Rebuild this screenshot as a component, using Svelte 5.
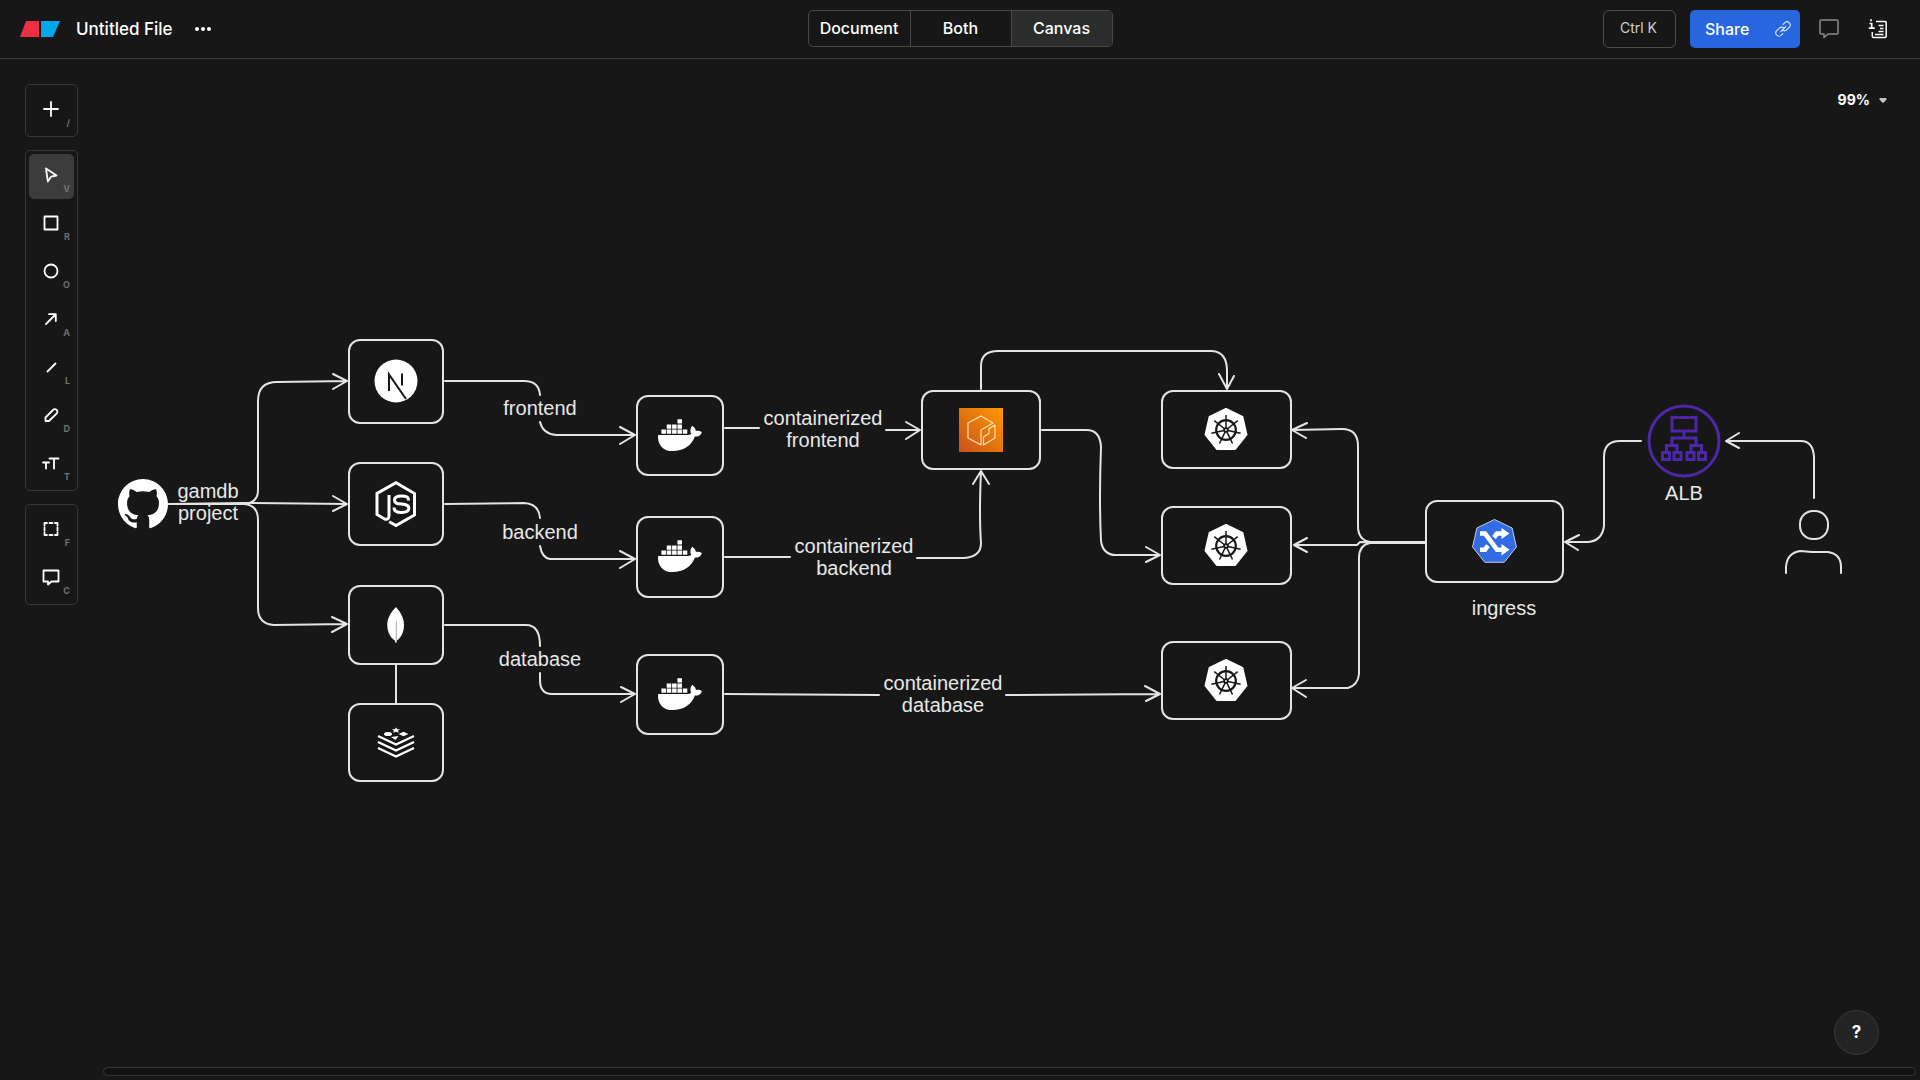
<script>
  let view = $state('Canvas');
  let tool = $state('Select');

  const views = ['Document', 'Both', 'Canvas'];

  // Every tool icon is stroked inside a 24 x 24 view box.
  const toolGroups = [
    [{ name: 'Insert', key: '/', d: 'M12 5v14M5 12h14' }],
    [
      { name: 'Select', key: 'V', d: 'M7 5.5l10.5 7-5.5 1.2-3.2 4.8z' },
      { name: 'Rectangle', key: 'R', d: 'M5.5 5.5h13v13h-13z' },
      { name: 'Oval', key: 'O', d: 'M18.5 12a6.500 6.500 0 1 1-13 0a6.500 6.500 0 1 1 13 0z' },
      { name: 'Arrow', key: 'A', d: 'M7 17l9.500-9.500M10 7.200h6.800V14' },
      { name: 'Line', key: 'L', d: 'M8.500 16.500l8-8' },
      { name: 'Draw', key: 'D', d: 'M6.500 18v-3.500l7.500-7.500a2.500 2.500 0 0 1 3.700 3.500L10 18z' },
      { name: 'Text', key: 'T', d: 'M10.500 7.500h9M15 7.500v10M4 11.500h6M7 11.500v6' }
    ],
    [
      { name: 'Figure', key: 'F', d: 'M5.500 8.500V6h2.500M10.500 6h3M16 6h2.500v2.500M18.500 10.500v3M18.500 15.500V18H16M13.500 18h-3M8 18H5.500v-2.500M5.500 13.500v-3' },
      { name: 'Comment', key: 'C', d: 'M4.500 5.500h15v11h-7l-3.500 3v-3H4.500z' }
    ]
  ];

  const boxes = [
    [349, 340, 94, 83], [349, 463, 94, 82], [349, 586, 94, 78], [349, 704, 94, 77],
    [637, 396, 86, 79], [637, 517, 86, 80], [637, 655, 86, 79],
    [922, 391, 118, 78],
    [1162, 391, 129, 77], [1162, 507, 129, 77], [1162, 642, 129, 77],
    [1426, 501, 137, 81]
  ];

  const edges = [
    'M169 504H244Q258 503 258 490V401Q258 382 277 382L347 381M333 374L347 381L333 389',
    'M169 504L244 503L347 504M333 496L347 504L333 511',
    'M169 504H244Q258 505 258 520V608Q258 624 274 625L347 624M332 617L347 624L332 632',
    'M445 381H524Q539 381 540 395M540 422Q543 434 556 435L635 435M620 427L635 435L620 444',
    'M445 504L524 503Q539 504 540 518M540 546Q542 558 550 559H635M620 551L635 559L620 568',
    'M445 625H526Q540 625 540 646M540 673V680Q540 694 552 694H635M621 687L635 694L621 702',
    'M396 665V704',
    'M725 428H759M886 430H920M906 422L920 430L906 439',
    'M725 557H790M917 558H964Q981 557 981 543Q979 515 981 471M973 484L981 471L989 484',
    'M725 694L879 695M1006 695L1160 694M1145 686L1160 694L1146 701',
    'M981 389V366Q981 351 998 351H1212Q1227 352 1227 371V389M1219 374L1227 389L1234 376',
    'M1042 430H1085Q1100 429 1101 447Q1099 500 1101 541Q1103 555 1116 555H1160M1146 547L1160 555L1146 562',
    'M1425 542H1370Q1358 540 1358 526V446Q1358 429 1342 429L1292 430M1307 423L1292 430L1306 438',
    'M1425 543L1360 542L1357 545H1294M1307 538L1294 545L1307 552',
    'M1425 543H1370Q1359 545 1359 558V674Q1358 685 1348 688H1293M1306 680L1292 688L1306 697',
    'M1641 441H1620Q1604 441 1604 457V526Q1602 541 1588 542H1566M1579 535L1565 542L1578 550',
    'M1814 498V457Q1813 441 1801 441H1726M1739 433L1726 441L1739 448'
  ];

  const labels = [
    { x: 208, y: 498, lines: ['gamdb', 'project'] },
    { x: 540, y: 415, lines: ['frontend'] },
    { x: 540, y: 539, lines: ['backend'] },
    { x: 540, y: 666, lines: ['database'] },
    { x: 823, y: 425, lines: ['containerized', 'frontend'] },
    { x: 854, y: 553, lines: ['containerized', 'backend'] },
    { x: 943, y: 690, lines: ['containerized', 'database'] },
    { x: 1504, y: 615, lines: ['ingress'] },
    { x: 1684, y: 500, lines: ['ALB'] }
  ];

  const whales = [[658, 417], [658, 538], [658, 676]];
  const wheels = [[1226, 430], [1226, 546], [1226, 681]];
  const sevenths = [0, 1, 2, 3, 4, 5, 6];

  function heptagon(r) {
    return sevenths
      .map((i) => {
        const a = (i * 2 * Math.PI) / 7;
        return `${(r * Math.sin(a)).toFixed(2)},${(-r * Math.cos(a)).toFixed(2)}`;
      })
      .join(' ');
  }
</script>

<div class="app">
  <svg class="canvas" role="img" aria-label="Deployment diagram">
    <defs>
      <linearGradient id="orange" x1="0" y1="1" x2="1" y2="0">
        <stop offset="0" stop-color="#c8511b" />
        <stop offset="1" stop-color="#ff9900" />
      </linearGradient>
    </defs>

    <g class="sketch">
      {#each boxes as [x, y, w, h]}
        <rect {x} {y} width={w} height={h} rx="11" />
      {/each}
      {#each edges as d}
        <path {d} />
      {/each}
      <!-- user -->
      <rect x="1800" y="511" width="28" height="28" rx="13" />
      <path d="M1786 573V567Q1787 553 1800 551L1812 552H1828Q1841 554 1841 567V573" />
    </g>

    <!-- GitHub -->
    <path class="solid" transform="translate(118 479) scale(.512)" d="M48.854 0C21.839 0 0 22 0 49.217c0 21.756 13.993 40.172 33.405 46.690 2.427.490 3.316-1.059 3.316-2.362 0-1.141-.080-5.052-.080-9.127-13.590 2.934-16.420-5.867-16.420-5.867-2.184-5.704-5.420-7.170-5.420-7.170-4.448-3.015.324-3.015.324-3.015 4.934.326 7.523 5.052 7.523 5.052 4.367 7.496 11.404 5.378 14.235 4.074.404-3.178 1.699-5.378 3.074-6.600-10.839-1.141-22.243-5.378-22.243-24.283 0-5.378 1.940-9.778 5.014-13.200-.485-1.222-2.184-6.275.486-13.038 0 0 4.125-1.304 13.426 5.052a46.970 46.970 0 0 1 12.214-1.630c4.125 0 8.330.571 12.213 1.630 9.302-6.356 13.427-5.052 13.427-5.052 2.670 6.763.970 11.816.485 13.038 3.155 3.422 5.015 7.822 5.015 13.200 0 18.905-11.404 23.060-22.324 24.283 1.780 1.548 3.316 4.481 3.316 9.126 0 6.600-.080 11.897-.080 13.526 0 1.304.890 2.853 3.316 2.364 19.412-6.520 33.405-24.935 33.405-46.691C97.707 22 75.788 0 48.854 0z" />

    <!-- Next.js -->
    <circle class="solid" cx="396" cy="381" r="21.500" />
    <path d="M389 391V374.500L406 399" fill="none" stroke="#171717" stroke-width="2" />
    <path d="M402 373.500V385.500" fill="none" stroke="#171717" stroke-width="2" />

    <!-- Node.js -->
    <g fill="none" stroke="#fff" stroke-width="3">
      <path d="M389 495v20.500q0 5-4.500 3.500l-7.500-4.500v-21l19-10.700 18.500 10.700v21.500l-18.500 10.500-6.800-3.800" />
      <path d="M408.500 500.500c0-4-2.500-4.500-7-4.500s-7 .800-7 4 2.500 3.600 7 4.100 7.300 1 7.300 4.200-2.800 4.200-7.300 4.200-7.500-1-7.500-5" />
    </g>

    <!-- MongoDB -->
    <path class="solid" d="M396 607c-6 6-9 12-8.700 19 .300 7 3.700 12 7.700 14.700l.400 2h1l.500-2.200c4.500-3.300 7.100-8.500 7.100-15.500s-3-12-8-18z" />
    <path d="M396.300 621v20" stroke="#a8a8a8" stroke-width="1" />

    <!-- Redis -->
    <path d="M378 736l18 8.500 18-8.500M378 742l18 8.500 18-8.500M378 748l18 8.500 18-8.500" fill="none" stroke="#fff" stroke-width="2.200" />
    <path class="solid" d="M396 727.500l1.300 1.800h2.700l-2 1.500.800 2-2.800-1-2.800 1 .700-2-2-1.500h2.700zM391 737l7.500-1-3 4z" />
    <ellipse class="solid" cx="388" cy="734" rx="4" ry="2" />
    <path class="solid" d="M398.500 734l5-2.300 5 2.300-5 2.300z" />

    <!-- Docker -->
    {#each whales as [x, y]}
      <path class="solid" transform="translate({x} {y}) scale(.0685 .0710)" d="M349.900 236.300h-66.100v-59.400h66.100v59.400zm0-204.300h-66.100v60.700h66.100V32zm78.200 144.800H362v59.400h66.100v-59.400zm-156.300-72.100h-66.100v60.100h66.100v-60.100zm78.100 0h-66.100v60.100h66.100v-60.100zm276.800 100c-14.400-9.700-47.600-13.200-73.100-8.400-3.300-24-16.700-44.900-41.100-63.700l-14-9.300-9.300 14c-18.400 27.800-23.400 73.600-3.700 103.800-8.700 4.700-25.800 11.100-48.400 10.700H2.400c-8.700 50.800 5.800 116.800 44 162.100 37.100 43.900 92.700 66.200 165.400 66.200 157.400 0 273.900-72.500 328.400-204.200 21.400.4 67.600.1 91.300-45.200 1.500-2.500 6.600-13.200 8.500-17.100l-13.300-8.900zm-511.100-27.900h-66v59.400h66.100v-59.400zm78.100 0h-66.100v59.400h66.100v-59.400zm78.100 0h-66.100v59.400h66.100v-59.400zm-78.100-72.100h-66.100v60.100h66.100v-60.100z" />
    {/each}

    <!-- Container registry -->
    <rect x="959" y="408" width="44" height="44" fill="url(#orange)" />
    <path d="M993 423l-12-7-13 7v15l13 7v-15zM995 425l-6 3.500v5l-5.500 3.500v8l11.500-7z" fill="none" stroke="#ffe0b8" stroke-width="1.200" stroke-linejoin="round" />

    <!-- Kubernetes -->
    {#each wheels as [x, y]}
      <g transform="translate({x} {y})">
        <polygon points={heptagon(21)} fill="#fff" stroke="#fff" stroke-width="2" stroke-linejoin="round" />
        <circle r="9.800" fill="none" stroke="#171717" stroke-width="2.200" />
        <circle r="2.800" fill="#171717" />
        {#each sevenths as i}
          <path d="M0-2V-15" transform="rotate({(i * 360) / 7})" stroke="#171717" stroke-width="1.500" />
        {/each}
        <circle r=".900" fill="#fff" />
      </g>
    {/each}

    <!-- Ingress -->
    <polygon transform="translate(1494.500 542)" points={heptagon(22.5)} fill="#326ce5" stroke="#c8ccd8" stroke-width="1" stroke-linejoin="round" />
    <path d="M1480 533.500h5l12 16.200h5M1480 549.700h5l3-4M1494 537.500l3-4h5" fill="none" stroke="#fff" stroke-width="4.600" />
    <path class="solid" d="M1501.500 528l8 5.500-8 5.500zM1501.500 544l8 5.700-8 5.700z" />

    <!-- Load balancer -->
    <g fill="none" stroke="#4d27aa" stroke-width="3">
      <circle cx="1684" cy="441" r="35" />
      <path d="M1672 417.500h24v13.500h-24zM1684 432v6M1672 446v-8h24v8M1666.500 452v-6.500h10.500v6.500M1691 452v-6.500h10.500v6.500" />
      <path d="M1662.500 452.500h7v7h-7zM1674 452.500h7v7h-7zM1687 452.500h7v7h-7zM1698.500 452.500h7v7h-7z" />
    </g>

    {#each labels as label}
      <text class="label" x={label.x} y={label.y}>
        {#each label.lines as line, i}
          <tspan x={label.x} dy={i ? 22 : 0}>{line}</tspan>
        {/each}
      </text>
    {/each}
  </svg>

  <header>
    <div class="side start">
      <svg class="logo" width="40" height="16" viewBox="0 0 40 16" role="img" aria-label="Home">
        <path d="M6 0h13v16H0z" fill="#ef2d44" />
        <path d="M21 0h19l-7 16H21z" fill="#00a8ea" />
      </svg>
      <h1>Untitled File</h1>
      <button class="plain more" aria-label="File options">
        <svg width="18" height="6" viewBox="0 0 18 6" fill="#fff">
          <circle cx="3" cy="3" r="2" /><circle cx="9" cy="3" r="2" /><circle cx="15" cy="3" r="2" />
        </svg>
      </button>
    </div>

    <div class="views" role="group" aria-label="View">
      {#each views as name}
        <button class:active={view === name} aria-pressed={view === name} onclick={() => (view = name)}>{name}</button>
      {/each}
    </div>

    <div class="side end">
      <button class="shortcut">Ctrl K</button>
      <button class="share">
        Share
        <svg width="18" height="18" viewBox="0 0 24 24" fill="none" stroke="#dce7ff" stroke-width="1.500" stroke-linecap="round">
          <path d="M13.200 10.800a4.200 4.200 0 0 0-6 0L3.700 14.300a4.200 4.200 0 0 0 6 6l2.200-2.200M9 15.500l6.500-6.500" />
          <path d="M10.800 13.200a4.200 4.200 0 0 0 6 0l3.500-3.500a4.200 4.200 0 0 0-6-6l-2.200 2.200" />
        </svg>
      </button>
      <button class="plain" aria-label="Comments">
        <svg width="20" height="20" viewBox="0 0 20 20" fill="none" stroke="#8c8c8c" stroke-width="1.500" stroke-linejoin="round">
          <path d="M2 1h16q1 0 1 1v12q0 1-1 1h-9l-4 3.500V15H2q-1 0-1-1V2q0-1 1-1z" />
        </svg>
      </button>
      <button class="plain info" aria-label="Document details">
        <svg width="20" height="20" viewBox="0 0 20 20" fill="none" stroke="#fff" stroke-width="1.500">
          <path d="M8 2.500h9q1.200 0 1.200 1.200v13.600q0 1.200-1.200 1.200H5.500q-1.200 0-1.200-1.200V13M10.500 6.500h5M12 9.500h3.500M10.500 12.500h5M7 15.500h8.500" />
          <path d="M1.500 4.500h2.200V9M.800 9.200h6M3 .300v2" stroke-width="1.700" />
        </svg>
      </button>
    </div>
  </header>

  <main>
    <nav aria-label="Tools">
      {#each toolGroups as group}
        <div class="tools">
          {#each group as item}
            <button class:active={tool === item.name} aria-label={item.name} onclick={() => (tool = item.name)}>
              <svg width="24" height="24" viewBox="0 0 24 24"><path d={item.d} /></svg>
              <kbd>{item.key}</kbd>
            </button>
          {/each}
        </div>
      {/each}
    </nav>

    <div class="corner">
      <button class="plain zoom" aria-haspopup="true">
        99%
        <svg width="8" height="5" viewBox="0 0 8 5"><path d="M1 0h6q1 .500.500 1.500L4.800 4.500q-.800.700-1.600 0L.500 1.500Q0 .500 1 0z" fill="#c4c4c4" /></svg>
      </button>
      <button class="help" aria-label="Help">?</button>
    </div>
  </main>

  <footer><div class="scroll"></div></footer>
</div>

<style>
  :global(body) {
    margin: 0;
    background: #171717;
  }
  .app {
    position: relative;
    display: flex;
    flex-direction: column;
    min-height: 100vh;
    overflow: hidden;
    background: #171717;
    color: #fff;
    font-family: Inter, "Liberation Sans", sans-serif;
  }
  .canvas {
    position: absolute;
    inset: 0;
    width: 100%;
    height: 100%;
  }
  .sketch {
    fill: none;
    stroke: #e4e4e4;
    stroke-width: 2;
    stroke-linecap: round;
    stroke-linejoin: round;
  }
  .solid {
    fill: #fff;
  }
  .label {
    fill: #e8e8e8;
    font-family: "Liberation Sans", sans-serif;
    font-size: 20px;
    text-anchor: middle;
  }
  button {
    box-sizing: border-box;
    margin: 0;
    padding: 0;
    border: 0;
    background: none;
    color: inherit;
    font: inherit;
    cursor: pointer;
  }
  button svg {
    display: block;
  }
  header {
    position: relative;
    display: grid;
    grid-template-columns: 1fr auto 1fr;
    align-items: start;
    box-sizing: border-box;
    height: 59px;
    padding-top: 10px;
    border-bottom: 1px solid #3c3c3c;
    background: #171717;
  }
  .side {
    display: flex;
    align-items: center;
    height: 38px;
  }
  .start {
    padding-left: 20px;
  }
  .end {
    justify-content: flex-end;
    padding-right: 32px;
  }
  h1 {
    margin: 0 21px 0 16px;
    font-size: 17px;
    line-height: 22px;
    font-weight: 500;
  }
  .views {
    display: flex;
    box-sizing: border-box;
    height: 37px;
    border: 1px solid #484848;
    border-radius: 5px;
    overflow: hidden;
  }
  .views button {
    width: 101px;
    padding-bottom: 1px;
    font-size: 16px;
    font-weight: 500;
  }
  .views button + button {
    border-left: 1px solid #484848;
  }
  .views .active {
    background: #2b2d2c;
  }
  .shortcut {
    width: 73px;
    height: 38px;
    margin-right: 14px;
    padding: 0 2px 3px 0;
    border: 1px solid #4c4c4c;
    border-radius: 6px;
    color: #d0d0d0;
    font-size: 14px;
  }
  .share {
    display: flex;
    align-items: center;
    justify-content: space-between;
    width: 110px;
    height: 38px;
    margin-right: 19px;
    padding: 0 8px 0 15px;
    border-radius: 5px;
    background: #2866df;
    font-size: 16px;
    font-weight: 500;
  }
  .info {
    margin-left: 29px;
  }
  main {
    position: relative;
    display: flex;
    flex: 1;
    justify-content: space-between;
    padding: 25px 32px 12px 25px;
  }
  nav {
    display: flex;
    flex-direction: column;
    gap: 13px;
  }
  .tools {
    display: flex;
    flex-direction: column;
    gap: 3px;
    padding: 3px;
    border: 1px solid #373737;
    border-radius: 5px;
    background: #171717;
  }
  .tools button {
    position: relative;
    display: flex;
    align-items: center;
    justify-content: center;
    width: 45px;
    height: 45px;
    padding: 0 1px 3px 0;
    border-radius: 5px;
  }
  .tools .active {
    background: #3c3c3c;
  }
  .tools path {
    fill: none;
    stroke: #fff;
    stroke-width: 1.800;
    stroke-linecap: round;
    stroke-linejoin: round;
  }
  kbd {
    position: absolute;
    right: 4px;
    bottom: 5px;
    color: #707070;
    font: 700 9px/11px Inter, sans-serif;
  }
  .corner {
    display: flex;
    flex-direction: column;
    align-items: flex-end;
    justify-content: space-between;
  }
  .zoom {
    display: flex;
    align-items: center;
    gap: 9px;
    padding: 6px 1px 0 0;
    font-size: 14px;
    line-height: 20px;
    font-weight: 700;
  }
  .help {
    width: 45px;
    height: 45px;
    margin-right: 9px;
    padding-bottom: 2px;
    border: 1px solid #3a3a3a;
    border-radius: 50%;
    background: #242424;
    font-size: 17px;
    font-weight: 700;
  }
  footer {
    position: relative;
    padding: 0 4px 4px 103px;
  }
  .scroll {
    height: 7px;
    border: 1px solid #363636;
    border-radius: 5px;
    background: #111;
  }
</style>
